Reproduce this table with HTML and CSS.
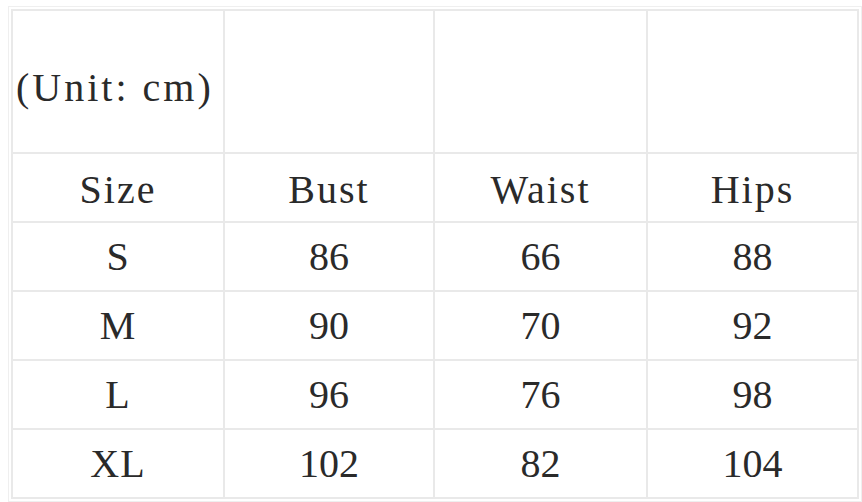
FILE: index.html
```html
<!DOCTYPE html>
<html lang="en">
<head>
<meta charset="utf-8">
<title>Size chart</title>
<link rel="stylesheet" href="styles.css">
</head>
<body>
<div class="frame">
  <table class="chart">
    <colgroup>
      <col class="c1"><col class="c2"><col class="c3"><col class="c4">
    </colgroup>
    <tr class="unit-row">
      <td class="unit">(Unit: cm)</td>
      <td></td>
      <td></td>
      <td></td>
    </tr>
    <tr class="head">
      <td>Size</td><td>Bust</td><td>Waist</td><td>Hips</td>
    </tr>
    <tr><td class="lbl">S</td><td>86</td><td>66</td><td>88</td></tr>
    <tr><td class="lbl">M</td><td>90</td><td>70</td><td>92</td></tr>
    <tr><td class="lbl">L</td><td>96</td><td>76</td><td>98</td></tr>
    <tr><td class="lbl">XL</td><td>102</td><td>82</td><td>104</td></tr>
  </table>
</div>
</body>
</html>
```

FILE: styles.css
```css
html, body {
  margin: 0;
  padding: 0;
  background: #ffffff;
}

body {
  padding: 6px 0 0 8px;
}

.frame {
  width: 848px;
  border: 1px solid #efefef;
  padding: 2px;
}

.chart {
  width: 846px;
  border-collapse: collapse;
  table-layout: fixed;
  border: 1px solid #e4e4e4;
  font-family: "Liberation Serif", "Times New Roman", serif;
  font-size: 40px;
  color: #2a2a2a;
}

.c1 { width: 212px; }
.c2 { width: 210px; }
.c3 { width: 213px; }
.c4 { width: 211px; }

.chart td {
  border: 2px solid #e9e9e9;
  text-align: center;
  vertical-align: middle;
  padding: 0;
  line-height: 1;
}

.chart tr { height: 69px; }
.chart .unit-row { height: 143px; }

.chart td.unit {
  text-align: left;
  padding: 12px 0 0 3px;
  letter-spacing: 3px;
  white-space: nowrap;
}

.head td {
  letter-spacing: 2px;
  padding-top: 4px;
}

.chart td.lbl {
  letter-spacing: 1px;
}
```
